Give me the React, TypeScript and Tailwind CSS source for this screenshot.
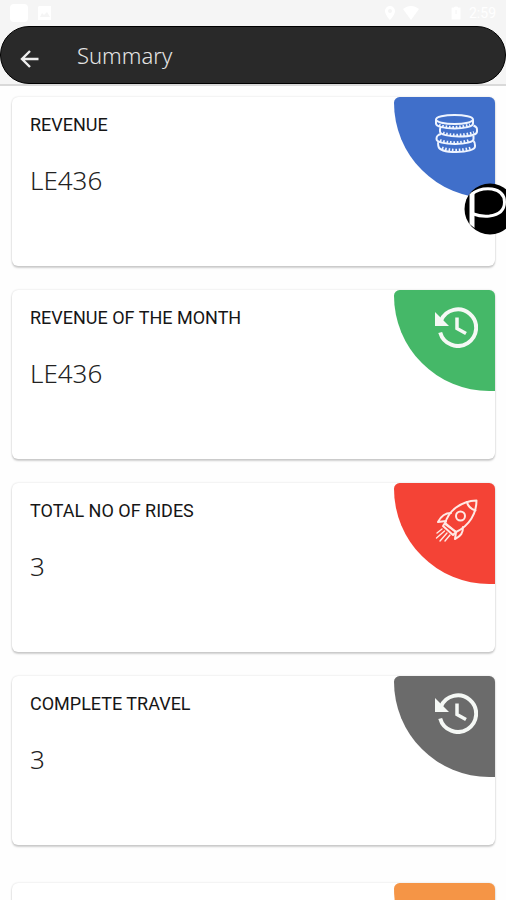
import type { ReactNode } from "react";
import clsx from "clsx";

const CoinsIcon = () => (
  <svg viewBox="0 0 44 42" className="h-[42px] w-11" fill="none" stroke="#eef4ff" strokeWidth="2" aria-hidden="true">
    <ellipse cx="20.500" cy="6.500" rx="18.500" ry="4.500" />
    <path d="M2 6.500v4c0 3 8.500 5 18.500 5s18.500-2 18.500-5v-4" />
    <path d="M7 14c-1.500 1-1 2.500-1 4.500 0 3 8.500 5 19 5s18-2 18-5c0-3 .5-4-3.500-6" />
    <path d="M7 21c-4 1-4.500 2.500-4.500 5 0 3 8 5 18.500 5s18.500-2 18.500-5v-3" />
    <path d="M4.500 29c-1 1-.5 2 0 4.500 .5 3 7 5.500 18 5.500s18.500-2.500 18.500-5.500c0-2 .5-4-1.500-5.500" />
    <path d="M5 12.200c8 3 22 3 31-.5M9 20c8 3 22 3 31-.7M6 27.500c8 3 22 3 30-.5M8 35c8 3 21 3 30-.5" strokeWidth="3" strokeDasharray="1.600 1.800" />
  </svg>
);

const HistoryIcon = () => (
  <svg viewBox="0 0 44 42" className="h-[42px] w-11" fill="none" stroke="#f5f8f5" strokeWidth="4" aria-hidden="true">
    <path d="M7 14.500A18.300 18.300 0 1 1 6.200 26.500" />
    <path d="M23 11.500v11l9 5" strokeWidth="3.500" />
    <path d="M1 6v14h14z" fill="#f5f8f5" stroke="none" />
  </svg>
);

const RocketIcon = () => (
  <svg viewBox="0 0 44 44" className="size-11" fill="none" stroke="#ffe9e5" strokeWidth="2" strokeLinejoin="round" strokeLinecap="round" aria-hidden="true">
    <path d="M11 25C14 12 27 2 42.500 1.500c0 13-7 25-20.500 31.500z" />
    <path d="M33 3c1 5 4 7 8.500 8.500" />
    <circle cx="26.500" cy="17" r="4.500" />
    <path d="M17 14c-6 0-10 3-13 9l8-1M29 28c0 6-2 9-8 12l1-7" />
    <path d="m9 27 10 9 3-3-11-9z" />
    <path d="m8 30-5 4M10.500 32l-8 7M13 34l-7 8M16 36l-5 6" strokeWidth="1.400" />
  </svg>
);

type CardProps = {
  label?: string;
  value?: string;
  color: string;
  icon: ReactNode;
};

const SummaryCard = ({ label, value, color, icon }: CardProps) => (
  <section className="flex h-[169px] shrink-0 justify-between rounded-md bg-white shadow-[0_2px_2px_rgba(0,0,0,0.18),0_0_2px_rgba(0,0,0,0.16)]">
    <div className="pt-4 pl-[18px]">
      {label && <h2 className="font-['Roboto',sans-serif] text-lg leading-6 text-[#161616]">{label}</h2>}
      {value && <p className="mt-[31px] font-['Noto_Sans',sans-serif] text-[26px] font-light leading-6 text-[#222]">{value}</p>}
    </div>
    <div className={clsx("flex size-[101px] justify-end rounded-md rounded-bl-[100px] rounded-br-none pt-4 pr-[17px]", color)}>
      {icon}
    </div>
  </section>
);

const StatusBar = () => (
  <div className="flex h-[26px] items-center justify-between px-2.5 text-white">
    <div className="flex items-center gap-2.5">
      <span className="size-[18px] rounded-sm bg-white" />
      <svg viewBox="0 0 14 14" className="size-3.5" aria-hidden="true">
        <path d="M1 0h12v14H0V1zM2 11h10L9 6 6 9 4 7z" fill="currentColor" fillRule="evenodd" />
      </svg>
    </div>
    <div className="flex items-center gap-2">
      <svg viewBox="0 0 10 14" className="h-3.5 w-2.5" aria-hidden="true">
        <path d="M5 0a5 5 0 0 1 5 5c0 4-5 9-5 9S0 9 0 5a5 5 0 0 1 5-5zm0 3a2 2 0 1 0 0 4 2 2 0 0 0 0-4z" fill="currentColor" />
      </svg>
      <svg viewBox="0 0 16 14" className="h-3.5 w-4" aria-hidden="true">
        <path d="M0 3c5-4 11-4 16 0L8 14z" fill="currentColor" />
      </svg>
      <svg viewBox="0 0 10 14" className="ml-6 h-3.5 w-2.5" aria-hidden="true">
        <path d="M3 0h4v1h3v13H0V1h3zM5 4v4" fill="currentColor" stroke="#f4f4f4" />
      </svg>
      <span className="font-['Roboto',sans-serif] text-sm">2:59</span>
    </div>
  </div>
);

export default function App() {
  return (
    <div className="relative flex h-screen flex-col overflow-hidden bg-[#fefefe]">
      <header className="shrink-0 border-b-2 border-[#d9d9d9] bg-[#f5f5f5]">
        <StatusBar />
        <div className="flex h-[58px] items-center gap-9 rounded-full border border-black bg-[#292929] pl-4">
          <button type="button" aria-label="Back" className="pt-2 text-[#eee]">
            <svg viewBox="0 0 24 24" className="size-6" fill="none" stroke="currentColor" strokeWidth="2.400" aria-hidden="true">
              <path d="M21.500 12H5M13 4l-8 8 8 8" />
            </svg>
          </button>
          <h1 className="font-['Noto_Sans',sans-serif] text-[22px] font-light text-[#e4e4e4]">Summary</h1>
        </div>
      </header>

      <main className="flex min-h-0 flex-1 flex-col gap-6 overflow-y-auto py-[11px] pr-[11px] pl-3 [scrollbar-width:none]">
        <SummaryCard label="REVENUE" value="LE436" color="bg-[#406fca]" icon={<CoinsIcon />} />
        <SummaryCard label="REVENUE OF THE MONTH" value="LE436" color="bg-[#45b868]" icon={<HistoryIcon />} />
        <SummaryCard label="TOTAL NO OF RIDES" value="3" color="bg-[#f44336]" icon={<RocketIcon />} />
        <SummaryCard label="COMPLETE TRAVEL" value="3" color="bg-[#6b6b6b]" icon={<HistoryIcon />} />
        <div className="pt-3.5">
          <SummaryCard color="bg-[#f59546]" icon={<HistoryIcon />} />
        </div>
      </main>

      <svg viewBox="0 0 42 52" className="absolute top-[183px] right-0 h-[52px] w-[42px]" aria-hidden="true">
        <circle cx="26" cy="26" r="25.500" fill="#000" />
        <path d="M5.500 11l5-3v37l-5-4z" fill="#fff" />
        <path d="M8 11C14 6 23 5.500 28 6c8 1.500 12.500 6 12.500 13 0 9-7 13-15 14-6 .5-11 0-16-2" fill="none" stroke="#fff" strokeWidth="3" />
      </svg>
    </div>
  );
}
